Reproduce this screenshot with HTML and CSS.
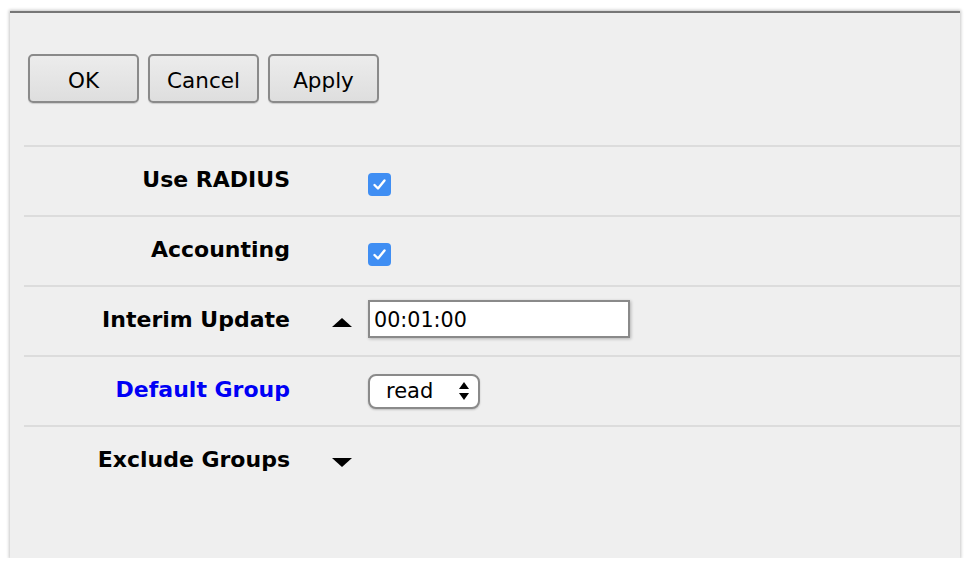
FILE: index.html
```html
<!DOCTYPE html>
<html>
<head>
<meta charset="utf-8">
<link rel="stylesheet" href="styles.css">
</head>
<body>
<div class="panel">
  <div class="toolbar">
    <button class="btn">OK</button>
    <button class="btn">Cancel</button>
    <button class="btn">Apply</button>
  </div>
  <div class="form">
    <div class="row">
      <div class="label">Use RADIUS</div>
      <div class="toggle"></div>
      <div class="field"><span class="check"><svg viewBox="0 0 23 23" width="23" height="23"><path d="M6.5 12 L10 15.5 L16.5 7.5" fill="none" stroke="#fff" stroke-width="2.4" stroke-linecap="round" stroke-linejoin="round"/></svg></span></div>
    </div>
    <div class="row">
      <div class="label">Accounting</div>
      <div class="toggle"></div>
      <div class="field"><span class="check"><svg viewBox="0 0 23 23" width="23" height="23"><path d="M6.5 12 L10 15.5 L16.5 7.5" fill="none" stroke="#fff" stroke-width="2.4" stroke-linecap="round" stroke-linejoin="round"/></svg></span></div>
    </div>
    <div class="row">
      <div class="label">Interim Update</div>
      <div class="toggle"><svg width="20" height="9" viewBox="0 0 20 9"><polygon points="10,0 20,9 0,9" fill="#000"/></svg></div>
      <div class="field"><div class="textbox">00:01:00</div></div>
    </div>
    <div class="row">
      <div class="label link">Default Group</div>
      <div class="toggle"></div>
      <div class="field"><div class="select"><span>read</span><svg width="10" height="18" viewBox="0 0 10 18"><polygon points="5,0 10,7 0,7" fill="#000"/><polygon points="0,11 10,11 5,18" fill="#000"/></svg></div></div>
    </div>
    <div class="row last">
      <div class="label">Exclude Groups</div>
      <div class="toggle"><svg width="20" height="9" viewBox="0 0 20 9"><polygon points="0,0 20,0 10,9" fill="#000"/></svg></div>
      <div class="field"></div>
    </div>
  </div>
</div>
</body>
</html>
```
FILE: styles.css
```css
html, body {
  margin: 0;
  padding: 0;
  background: #fff;
}
body {
  font-family: "DejaVu Sans", Verdana, sans-serif;
}
.panel {
  box-sizing: border-box;
  margin: 11px 0 0 10px;
  width: 950px;
  height: 547px;
  background: #efefef;
  border-top: 2px solid #777;
  box-shadow: 0 0 3px 1px rgba(0, 0, 0, 0.22);
}
.toolbar {
  display: flex;
  gap: 9px;
  padding: 41px 0 0 18px;
  height: 91px;
}
.btn {
  box-sizing: border-box;
  width: 111px;
  height: 49px;
  border: 2px solid #8a8a8a;
  border-radius: 5px;
  background: linear-gradient(#ececec, #dedede);
  font-family: "DejaVu Sans", Verdana, sans-serif;
  font-size: 21.5px;
  color: #000;
  padding: 3px 0 0 0;
  box-shadow: 0 1px 1px rgba(0,0,0,0.15);
}
.form {
  margin-left: 14px;
}
.row {
  display: grid;
  grid-template-columns: 266px 78px 1fr;
  align-items: center;
  height: 68px;
  border-top: 2px solid #dcdcdc;
}
.label {
  text-align: right;
  font-weight: bold;
  font-size: 22px;
  color: #000;
  padding-bottom: 4px;
}
.label.link {
  color: #0000f5;
}
.toggle {
  padding-left: 42px;
  display: flex;
  align-items: center;
  padding-top: 2px;
}
.field {
  display: flex;
  align-items: center;
}
.check {
  display: block;
  width: 23px;
  height: 23px;
  border-radius: 4px;
  background: #3f8ef3;
  margin-top: 6px;
}
.check svg {
  display: block;
}
.textbox {
  box-sizing: border-box;
  width: 262px;
  height: 38px;
  margin-top: -4px;
  background: #fff;
  border: 2px solid #8a8a8a;
  box-shadow: 1px 1px 3px rgba(0,0,0,0.25);
  font-size: 20.7px;
  padding: 6px 0 0 4px;
  color: #000;
}
.select {
  box-sizing: border-box;
  width: 112px;
  height: 35px;
  background: #fff;
  border: 2px solid #8a8a8a;
  border-radius: 8px;
  box-shadow: 0 1px 2px rgba(0,0,0,0.2);
  display: flex;
  align-items: center;
  justify-content: space-between;
  padding: 0 9px 0 16px;
  font-size: 21px;
  color: #000;
}
.select svg {
  display: block;
}
```
